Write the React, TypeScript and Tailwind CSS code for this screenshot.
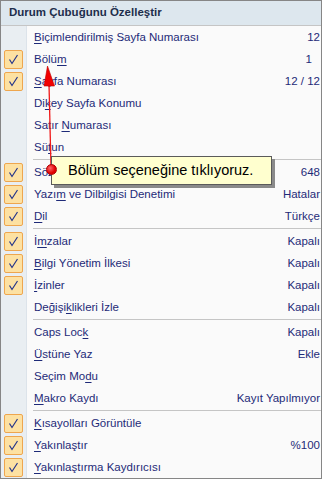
import React from "react";

type Row = {
  label: string;
  key?: number; // index of the underlined access key
  value?: string;
  checked?: boolean;
  valueClass?: string;
};

// groups of menu rows, a separator is drawn between groups
const groups: Row[][] = [
  [
    { label: "Biçimlendirilmiş Sayfa Numarası", key: 0, value: "12" },
    { label: "Bölüm", key: 4, value: "1", checked: true, valueClass: "mr-[8px]" },
    { label: "Sayfa Numarası", key: 0, value: "12 / 12", checked: true },
    { label: "Dikey Sayfa Konumu", key: 2 },
    { label: "Satır Numarası", key: 6 },
    { label: "Sütun", key: 2 },
  ],
  [
    { label: "Sözcük Sayısı", value: "648", checked: true },
    { label: "Yazım ve Dilbilgisi Denetimi", key: 4, value: "Hatalar", checked: true },
    { label: "Dil", key: 0, value: "Türkçe", checked: true },
  ],
  [
    { label: "İmzalar", key: 1, value: "Kapalı", checked: true },
    { label: "Bilgi Yönetim İlkesi", key: 0, value: "Kapalı", checked: true },
    { label: "İzinler", key: 0, value: "Kapalı", checked: true },
    { label: "Değişiklikleri İzle", key: 6, value: "Kapalı" },
  ],
  [
    { label: "Caps Lock", key: 8, value: "Kapalı" },
    { label: "Üstüne Yaz", key: 0, value: "Ekle" },
    { label: "Seçim Modu", key: 8 },
    { label: "Makro Kaydı", key: 0, value: "Kayıt Yapılmıyor" },
  ],
  [
    { label: "Kısayolları Görüntüle", key: 0, checked: true },
    { label: "Yakınlaştır", key: 0, value: "%100", checked: true },
    { label: "Yakınlaştırma Kaydırıcısı", key: 0, checked: true },
  ],
];

function Label({ text, k }: { text: string; k?: number }) {
  if (k === undefined) return <span>{text}</span>;
  return (
    <span>
      {text.slice(0, k)}
      <span className="underline underline-offset-[2px]">{text[k]}</span>
      {text.slice(k + 1)}
    </span>
  );
}

function CheckBox() {
  return (
    <div className="flex h-[19px] w-[19px] items-center justify-center rounded-[2px] border border-[#eea64e] bg-[#fde1a2]">
      <svg width="11" height="11" viewBox="0 0 11 11">
        <path d="M1.5 5.5 L4 9.5 L9.5 1" fill="none" stroke="#24348a" strokeWidth="1.2" />
      </svg>
    </div>
  );
}

function MenuRow({ row }: { row: Row }) {
  return (
    <div className="flex h-[22px] items-center">
      <div className="flex h-full w-[26px] shrink-0 items-center border-r border-[#dce3ea] bg-[#e9eef2] pl-[3px]">
        {row.checked && <CheckBox />}
      </div>
      <div className="flex flex-1 items-center justify-between pl-[7px] pr-[1px] pt-[1px]">
        <Label text={row.label} k={row.key} />
        {row.value && <span className={row.valueClass}>{row.value}</span>}
      </div>
    </div>
  );
}

function Separator() {
  return (
    <div className="flex h-[3px]">
      <div className="w-[26px] shrink-0 border-r border-[#dce3ea] bg-[#e9eef2]" />
      <div className="flex flex-1 items-center pl-[6px]">
        <div className="h-px w-full bg-[#c5c5c5]" />
      </div>
    </div>
  );
}

export default function App() {
  return (
    <div className="relative h-[479px] w-[324px] bg-white font-['Liberation_Sans',Arial,sans-serif] text-[11.5px] text-[#1e2a78]">
      <div className="w-[322px] border border-[#868686] bg-[#fafafa]">
        <div className="flex h-[25px] items-center border-b border-[#c5c5c5] bg-[#dde7ee] pl-[8px] font-bold text-[#1e2e4c]">
          Durum Çubuğunu Özelleştir
        </div>
        {groups.map((g, gi) => (
          <React.Fragment key={gi}>
            {gi > 0 && <Separator />}
            {g.map((r) => (
              <MenuRow key={r.label} row={r} />
            ))}
          </React.Fragment>
        ))}
      </div>

      {/* annotation: arrow + callout */}
      <svg className="pointer-events-none absolute left-0 top-0" width="324" height="479">
        <line x1="51" y1="168" x2="49" y2="84" stroke="#f01818" strokeWidth="1.3" />
        <polygon points="47.5,66 44,86 54.5,86" fill="#f20000" stroke="#c00000" strokeWidth="0.6" />
      </svg>
      <div className="absolute left-[51px] top-[156px] flex h-[29px] w-[221px] items-center border border-[#5a5a5a] bg-[#ffffcf] pl-[16px] font-['Liberation_Sans',Arial,sans-serif] text-[14.5px] text-black shadow-[3px_3px_0_#8a8a8a]">
        Bölüm seçeneğine tıklıyoruz.
      </div>
      <div className="absolute left-[46px] top-[164px] h-[11px] w-[11px] rounded-full border border-[#b00000] bg-[radial-gradient(circle_at_35%_35%,#ff6a6a,#e00000_60%)]" />
    </div>
  );
}
